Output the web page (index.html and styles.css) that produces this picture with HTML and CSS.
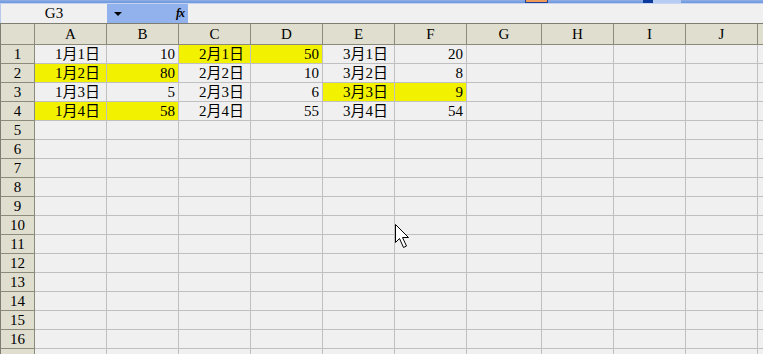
FILE: index.html
```html
<!DOCTYPE html>
<html lang="zh-CN">
<head>
    <meta charset="UTF-8">
    <title>Sheet1</title>
    <link rel="stylesheet" href="styles.css">
</head>
<body>

    <!-- window title strip -->
    <div class="title-strip">
        <span class="strip-box"></span>
        <span class="strip-tab"></span>
    </div>

    <!-- name box + formula bar -->
    <div class="formula-row">
        <div class="name-box">G3</div>
        <div class="name-tools">
            <span class="drop-arrow"></span>
            <span class="fx">fx</span>
        </div>
        <div class="formula-input"></div>
    </div>

    <!-- worksheet -->
    <div class="sheet">
        <div class="head corner"></div>
        <div class="head">A</div><div class="head">B</div><div class="head">C</div><div class="head">D</div><div class="head">E</div><div class="head">F</div><div class="head">G</div><div class="head">H</div><div class="head">I</div><div class="head">J</div><div class="head edge"></div>

        <div class="rh">1</div>
        <div class="c date">1月1日</div><div class="c num">10</div><div class="c date hl">2月1日</div><div class="c num hl">50</div><div class="c date">3月1日</div><div class="c num">20</div><div class="c"></div><div class="c"></div><div class="c"></div><div class="c"></div><div class="c edge"></div>

        <div class="rh">2</div>
        <div class="c date hl">1月2日</div><div class="c num hl">80</div><div class="c date">2月2日</div><div class="c num">10</div><div class="c date">3月2日</div><div class="c num">8</div><div class="c"></div><div class="c"></div><div class="c"></div><div class="c"></div><div class="c edge"></div>

        <div class="rh">3</div>
        <div class="c date">1月3日</div><div class="c num">5</div><div class="c date">2月3日</div><div class="c num">6</div><div class="c date hl">3月3日</div><div class="c num hl">9</div><div class="c"></div><div class="c"></div><div class="c"></div><div class="c"></div><div class="c edge"></div>

        <div class="rh">4</div>
        <div class="c date hl">1月4日</div><div class="c num hl">58</div><div class="c date">2月4日</div><div class="c num">55</div><div class="c date">3月4日</div><div class="c num">54</div><div class="c"></div><div class="c"></div><div class="c"></div><div class="c"></div><div class="c edge"></div>

        <div class="rh">5</div><div class="c"></div><div class="c"></div><div class="c"></div><div class="c"></div><div class="c"></div><div class="c"></div><div class="c"></div><div class="c"></div><div class="c"></div><div class="c"></div><div class="c edge"></div>
        <div class="rh">6</div><div class="c"></div><div class="c"></div><div class="c"></div><div class="c"></div><div class="c"></div><div class="c"></div><div class="c"></div><div class="c"></div><div class="c"></div><div class="c"></div><div class="c edge"></div>
        <div class="rh">7</div><div class="c"></div><div class="c"></div><div class="c"></div><div class="c"></div><div class="c"></div><div class="c"></div><div class="c"></div><div class="c"></div><div class="c"></div><div class="c"></div><div class="c edge"></div>
        <div class="rh">8</div><div class="c"></div><div class="c"></div><div class="c"></div><div class="c"></div><div class="c"></div><div class="c"></div><div class="c"></div><div class="c"></div><div class="c"></div><div class="c"></div><div class="c edge"></div>
        <div class="rh">9</div><div class="c"></div><div class="c"></div><div class="c"></div><div class="c"></div><div class="c"></div><div class="c"></div><div class="c"></div><div class="c"></div><div class="c"></div><div class="c"></div><div class="c edge"></div>
        <div class="rh">10</div><div class="c"></div><div class="c"></div><div class="c"></div><div class="c"></div><div class="c"></div><div class="c"></div><div class="c"></div><div class="c"></div><div class="c"></div><div class="c"></div><div class="c edge"></div>
        <div class="rh">11</div><div class="c"></div><div class="c"></div><div class="c"></div><div class="c"></div><div class="c"></div><div class="c"></div><div class="c"></div><div class="c"></div><div class="c"></div><div class="c"></div><div class="c edge"></div>
        <div class="rh">12</div><div class="c"></div><div class="c"></div><div class="c"></div><div class="c"></div><div class="c"></div><div class="c"></div><div class="c"></div><div class="c"></div><div class="c"></div><div class="c"></div><div class="c edge"></div>
        <div class="rh">13</div><div class="c"></div><div class="c"></div><div class="c"></div><div class="c"></div><div class="c"></div><div class="c"></div><div class="c"></div><div class="c"></div><div class="c"></div><div class="c"></div><div class="c edge"></div>
        <div class="rh">14</div><div class="c"></div><div class="c"></div><div class="c"></div><div class="c"></div><div class="c"></div><div class="c"></div><div class="c"></div><div class="c"></div><div class="c"></div><div class="c"></div><div class="c edge"></div>
        <div class="rh">15</div><div class="c"></div><div class="c"></div><div class="c"></div><div class="c"></div><div class="c"></div><div class="c"></div><div class="c"></div><div class="c"></div><div class="c"></div><div class="c"></div><div class="c edge"></div>
        <div class="rh">16</div><div class="c"></div><div class="c"></div><div class="c"></div><div class="c"></div><div class="c"></div><div class="c"></div><div class="c"></div><div class="c"></div><div class="c"></div><div class="c"></div><div class="c edge"></div>
        <div class="rh"></div><div class="c"></div><div class="c"></div><div class="c"></div><div class="c"></div><div class="c"></div><div class="c"></div><div class="c"></div><div class="c"></div><div class="c"></div><div class="c"></div><div class="c edge"></div>

        <!-- mouse pointer -->
        <svg class="pointer" width="16" height="26" viewBox="0 0 16 26">
            <path d="M0.5 0.5 V18.5 L4.5 14.5 L8.5 23.5 L11.5 22 L7.5 13.5 H13.5 Z" fill="#fff" stroke="#000" stroke-width="1"/>
        </svg>
    </div>

</body>
</html>
```

FILE: styles.css
```css
/* Page */
body {
    margin: 0;
    width: 763px;
    height: 354px;
    overflow: hidden;
    background-color: #f0f0f0;
    font-family: "Liberation Serif", "Noto Sans CJK SC", serif;
    font-size: 15px;
    color: #000;
}

/* Title strip at the very top */
.title-strip {
    position: relative;
    height: 3px;
    background: linear-gradient(#8fb0e8, #6a94d8);
    border-bottom: 1px solid #c4d4f2;
}

.strip-box {
    position: absolute;
    left: 525px;
    top: 0;
    width: 21px;
    height: 2px;
    background-color: #f09a5a;
    border: 1px solid #1f3f8f;
    border-top: none;
}

.strip-tab {
    position: absolute;
    left: 643px;
    top: 0;
    width: 38px;
    height: 3px;
    background: linear-gradient(90deg, #0c3a9c 0 10px, #b8cdf2 10px);
}

/* Name box and formula bar */
.formula-row {
    display: flex;
    height: 19px;
}

.name-box {
    width: 106px;
    border-left: 1px solid #b7c8ea;
    text-align: center;
    line-height: 19px;
    background-color: #f0f0f0;
}

.name-tools {
    width: 81px;
    display: flex;
    align-items: center;
    justify-content: space-between;
    padding: 0 4px 0 7px;
    box-sizing: border-box;
    background-color: #92b2ee;
}

.drop-arrow {
    width: 0;
    height: 0;
    border-left: 4px solid transparent;
    border-right: 4px solid transparent;
    border-top: 4px solid #000;
}

.fx {
    font-family: "Liberation Serif", serif;
    font-style: italic;
    font-weight: bold;
    font-size: 12px;
    letter-spacing: -1px;
}

.formula-input {
    flex: 1;
    background-color: #f0f0f0;
}

/* Worksheet grid */
.sheet {
    position: relative;
    display: grid;
    grid-template-columns: 35px repeat(6, 72px) 75px repeat(3, 72px) 5px;
    grid-template-rows: 21px;
    grid-auto-rows: 19px;
    border-top: 1px solid #7f7c72;
}

.sheet > div {
    box-sizing: border-box;
    white-space: nowrap;
    overflow: hidden;
}

.head {
    background-color: #dfdecf;
    border-right: 1px solid #8c8a7a;
    border-bottom: 1px solid #8c8a7a;
    text-align: center;
    line-height: 20px;
}

.head.corner {
    border-left: 1px solid #7f7c72;
}

.head.edge {
    border-right: none;
}

.rh {
    background-color: #dfdecf;
    border-left: 1px solid #7f7c72;
    border-right: 1px solid #8c8a7a;
    border-bottom: 1px solid #8c8a7a;
    text-align: center;
    line-height: 18px;
}

.c {
    background-color: #f0f0f0;
    border-right: 1px solid #c0c0c0;
    border-bottom: 1px solid #c0c0c0;
    line-height: 18px;
}

.c.edge {
    border-right: none;
}

.date {
    text-align: right;
    padding-right: 6px;
}

.num {
    text-align: right;
    padding-right: 3px;
}

.hl {
    background-color: #f2f200;
}

/* Mouse pointer over the sheet */
.pointer {
    position: absolute;
    left: 395px;
    top: 200px;
}
```
